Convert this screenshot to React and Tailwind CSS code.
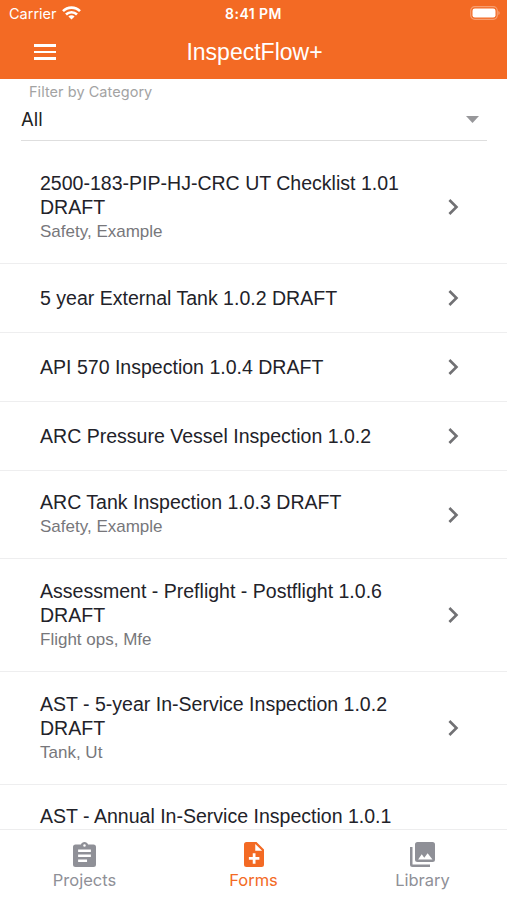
import React, { useState } from "react";
import { MdChevronRight } from "react-icons/md";

const forms = [
  { title: ["2500-183-PIP-HJ-CRC UT Checklist 1.01", "DRAFT"], tags: "Safety, Example" },
  { title: ["5 year External Tank 1.0.2 DRAFT"] },
  { title: ["API 570 Inspection 1.0.4 DRAFT"] },
  { title: ["ARC Pressure Vessel Inspection 1.0.2"] },
  { title: ["ARC Tank Inspection 1.0.3 DRAFT"], tags: "Safety, Example" },
  { title: ["Assessment - Preflight - Postflight 1.0.6", "DRAFT"], tags: "Flight ops, Mfe" },
  { title: ["AST - 5-year In-Service Inspection 1.0.2", "DRAFT"], tags: "Tank, Ut" },
];

const tabs = [
  {
    label: "Projects",
    path: "M19 3h-4.18C14.4 1.84 13.3 1 12 1s-2.4.84-2.82 2H5a2 2 0 0 0-2 2v14a2 2 0 0 0 2 2h14a2 2 0 0 0 2-2V5a2 2 0 0 0-2-2zm-7-.3a1 1 0 1 1 0 2 1 1 0 0 1 0-2zm2 14.3H7v-2h7v2zm3-4H7v-2h10v2zm0-4H7V7h10v2z",
    box: "3 1 18 20",
    size: "w-[23px] h-[25px]",
  },
  {
    label: "Forms",
    path: "M14 2H6a2 2 0 0 0-2 2v16a2 2 0 0 0 2 2h12a2 2 0 0 0 2-2V8l-6-6zm2.3 14.2h-3.1v3.1h-2.2v-3.1H7.9V14H11v-3.1h2.2V14h3.1v2.2zM13 9V3.5L18.5 9H13z",
    box: "4 2 16 20",
    size: "w-[20px] h-[25px]",
  },
  {
    label: "Library",
    path: "M22 16V4a2 2 0 0 0-2-2H8a2 2 0 0 0-2 2v12a2 2 0 0 0 2 2h12a2 2 0 0 0 2-2zm-13.5 0l2.9-4.2 2 2.7 2.7-3.5 3.9 5H8.5zM2 6v14a2 2 0 0 0 2 2h14v-2H4V6H2z",
    box: "2 2 20 20",
    size: "w-[25px] h-[25px]",
  },
];

const StatusBar = () => (
  <div className="relative flex h-[27px] items-center justify-between pl-[9px] pr-[7px]">
    <div className="flex items-center gap-[5px]">
      <span className="text-[14.5px]">Carrier</span>
      <svg className="-mt-[2px] h-[14px] w-[19px]" viewBox="0 0 19 14" fill="none" stroke="currentColor" strokeWidth="2.6">
        <path d="M1 5.2a12 12 0 0 1 17 0" />
        <path d="M4 8.5a7.8 7.8 0 0 1 11 0" />
        <path d="M9.5 13.6L6.4 10.5a4.4 4.4 0 0 1 6.2 0z" fill="currentColor" stroke="none" />
      </svg>
    </div>
    <span className="absolute inset-x-0 text-center text-[14px] font-semibold tracking-[0.45px]">8:41 PM</span>
    <svg className="-mt-[1px] h-[14px] w-[30px]" viewBox="0 0 30 14">
      <rect x="0.7" y="0.7" width="26.6" height="12.6" rx="4" fill="none" stroke="#fff" strokeOpacity=".35" strokeWidth="1.2" />
      <rect x="2.5" y="2.5" width="23" height="9" rx="2.3" fill="#fff" />
      <path d="M28.5 5v4c1.4-.6 1.4-3.4 0-4z" fill="#fff" fillOpacity=".5" />
    </svg>
  </div>
);

const titleClass = "whitespace-nowrap text-[19.55px] leading-[24.5px] text-[#222229]";

const FormRow = ({ title, tags }) => (
  <button
    className={`flex w-full shrink-0 items-center border-b border-[#eeeeef] pl-10 pr-[38px] text-left ${
      title.length > 1 ? "h-[113px]" : tags ? "h-[88px]" : "h-[69px]"
    }`}
  >
    <div className="flex-1">
      {title.map((line) => (
        <p key={line} className={titleClass}>
          {line}
        </p>
      ))}
      {tags && <p className="text-[17px] leading-[24px] text-[#77777b]">{tags}</p>}
    </div>
    <MdChevronRight className="size-8 text-[#717174]" />
  </button>
);

const App = () => {
  const [activeTab, setActiveTab] = useState("Forms");

  return (
    <div className="flex h-[900px] w-full flex-col overflow-hidden bg-white font-['Liberation_Sans',sans-serif]">
      {/* Header */}
      <header className="h-[79px] shrink-0 bg-[#f36a24] font-['Inter',sans-serif] text-white">
        <StatusBar />
        <div className="relative flex h-[50px] items-center pl-[34px]">
          <button className="z-10 flex w-[22px] flex-col gap-[4px]">
            <span className="h-[2.5px] bg-white" />
            <span className="h-[2.5px] bg-white" />
            <span className="h-[2.5px] bg-white" />
          </button>
          <h1 className="absolute inset-x-0 pl-[2px] text-center font-['Liberation_Sans',sans-serif] text-[23px]">
            InspectFlow+
          </h1>
        </div>
      </header>

      {/* Category filter */}
      <div className="ml-[21px] mr-5 h-[62px] shrink-0 border-b border-[#dedede]">
        <p className="pl-2 pt-[3px] font-['Inter',sans-serif] text-[14.5px] leading-5 tracking-[0.05px] text-[#a3a3a3]">
          Filter by Category
        </p>
        <div className="flex items-center justify-between pr-2">
          <span className="font-['Inter',sans-serif] text-[18.5px] leading-[34px] text-[#222]">All</span>
          <svg className="h-[7px] w-[13px]" viewBox="0 0 13 7">
            <path d="M0 0h13L6.5 7z" fill="#97979a" />
          </svg>
        </div>
      </div>

      {/* Forms list */}
      <main className="flex min-h-0 flex-1 flex-col overflow-hidden pt-[10px]">
        {forms.map((form) => (
          <FormRow key={form.title[0]} {...form} />
        ))}
        <button className="flex w-full flex-1 items-end pb-px pl-10 text-left">
          <p className={titleClass}>AST - Annual In-Service Inspection 1.0.1</p>
        </button>
      </main>

      {/* Bottom tabs */}
      <nav className="grid h-[71px] shrink-0 grid-cols-3 border-t border-[#ededee] bg-white">
        {tabs.map(({ label, path, box, size }) => (
          <button
            key={label}
            onClick={() => setActiveTab(label)}
            className={`flex flex-col items-center pt-3 ${activeTab === label ? "text-[#f36a24]" : "text-[#8f9097]"}`}
          >
            <svg className={size} viewBox={box} preserveAspectRatio="none" fill="currentColor">
              <path fillRule="evenodd" d={path} />
            </svg>
            <span className="mt-px font-['Inter',sans-serif] text-[16.5px] leading-6">{label}</span>
          </button>
        ))}
      </nav>
    </div>
  );
};

export default App;
